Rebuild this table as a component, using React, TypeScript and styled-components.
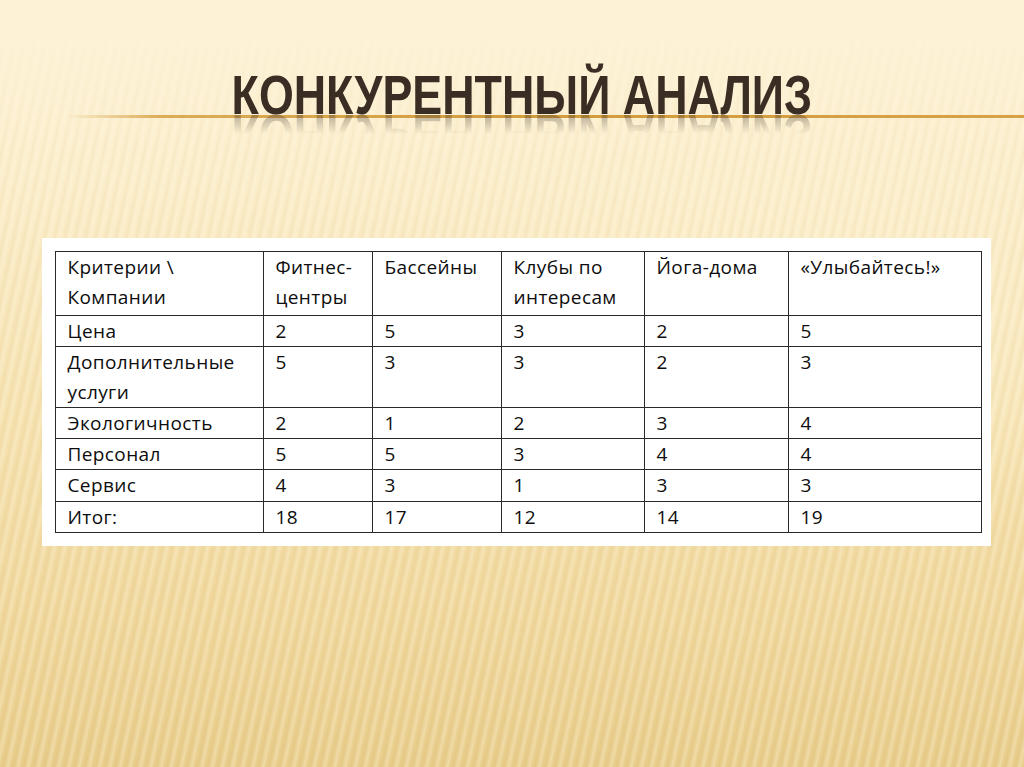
import React from "react";
import styled, { createGlobalStyle } from "styled-components";

const Global = createGlobalStyle`
  html, body { margin: 0; padding: 0; }
  body { width: 1024px; height: 767px; overflow: hidden; }
`;

const Slide = styled.div`
  position: relative;
  width: 1024px;
  height: 767px;
  overflow: hidden;
  background:
    repeating-linear-gradient(102deg, rgba(190,150,70,0) 0px, rgba(190,150,70,0.08) 3px, rgba(255,248,225,0.32) 7px, rgba(190,150,70,0) 10px),
    radial-gradient(ellipse 420px 200px at 820px 330px, rgba(255,244,215,0.55), rgba(255,244,215,0) 100%),
    linear-gradient(180deg, #fdf2d6 0%, #fbedc9 25%, #f6e2b0 55%, #f0d79c 80%, #e8cc8a 100%);
  display: flex;
  flex-direction: column;
  align-items: center;
`;

const Fade = styled.div`
  position: absolute;
  inset: 0;
  background: linear-gradient(180deg, rgba(253,242,214,1) 0%, rgba(253,242,214,0.9) 5%, rgba(253,242,214,0.2) 20%, rgba(253,242,214,0) 35%);
  pointer-events: none;
`;

const Header = styled.div`
  position: relative;
  width: 100%;
  height: 238px;
`;

const Rule = styled.div`
  position: absolute;
  left: 65px;
  right: 0;
  top: 115px;
  height: 3px;
  background: linear-gradient(90deg, rgba(214,160,64,0) 0%, rgba(214,160,64,0.85) 10%, #d39c3c 50%, #d7a247 100%);
`;

const TitleWrap = styled.div`
  position: absolute;
  left: 0;
  right: 0;
  top: 67px;
  display: flex;
  flex-direction: column;
  align-items: center;
  padding-left: 20px;
`;

const Title = styled.h1`
  margin: 0;
  font-family: "Liberation Sans", Arial, sans-serif;
  font-weight: bold;
  font-size: 56px;
  line-height: 56px;
  color: #3a2d23;
  transform: scaleX(0.8);
  white-space: nowrap;
  position: relative;
  z-index: 1;
`;

const Reflection = styled(Title)`
  transform: scaleX(0.8) scaleY(-1);
  margin-top: -17px;
  opacity: 0.55;
  -webkit-mask-image: linear-gradient(0deg, rgba(0,0,0,0.9) 0%, rgba(0,0,0,0) 50%);
  mask-image: linear-gradient(0deg, rgba(0,0,0,0.9) 0%, rgba(0,0,0,0) 50%);
  z-index: 0;
`;

const Panel = styled.div`
  position: relative;
  background: #ffffff;
  padding: 13px 9px 13px 13px;
  margin-left: 8px;
`;

const Table = styled.table`
  border-collapse: collapse;
  font-family: "Open Sans", "Noto Sans", sans-serif;
  font-size: 19px;
  letter-spacing: 0.4px;
  color: #0d0d0d;
`;

const Cell = styled.td<{ $w: number; $h: number }>`
  width: ${(p) => p.$w}px;
  height: ${(p) => p.$h}px;
  box-sizing: border-box;
  border: 1px solid #2a2a2a;
  padding: 0 6px 0 12px;
  vertical-align: top;
  line-height: 30px;
  text-align: left;
  white-space: nowrap;
`;

const widths = [208, 109, 129, 143, 144, 193];

const rows: { h: number; cells: React.ReactNode[] }[] = [
  { h: 64, cells: [<>Критерии \<br />Компании</>, <>Фитнес-<br />центры</>, "Бассейны", <>Клубы по<br />интересам</>, "Йога-дома", "«Улыбайтесь!»"] },
  { h: 30, cells: ["Цена", "2", "5", "3", "2", "5"] },
  { h: 60, cells: [<>Дополнительные<br />услуги</>, "5", "3", "3", "2", "3"] },
  { h: 31, cells: ["Экологичность", "2", "1", "2", "3", "4"] },
  { h: 31, cells: ["Персонал", "5", "5", "3", "4", "4"] },
  { h: 32, cells: ["Сервис", "4", "3", "1", "3", "3"] },
  { h: 30, cells: ["Итог:", "18", "17", "12", "14", "19"] },
];

export default function App() {
  return (
    <>
      <Global />
      <Slide>
        <Fade />
        <Header>
          <Rule />
          <TitleWrap>
            <Title>КОНКУРЕНТНЫЙ АНАЛИЗ</Title>
            <Reflection aria-hidden>КОНКУРЕНТНЫЙ АНАЛИЗ</Reflection>
          </TitleWrap>
        </Header>
        <Panel>
          <Table>
            <tbody>
              {rows.map((r, i) => (
                <tr key={i}>
                  {r.cells.map((c, j) => (
                    <Cell key={j} $w={widths[j]} $h={r.h}>
                      {c}
                    </Cell>
                  ))}
                </tr>
              ))}
            </tbody>
          </Table>
        </Panel>
      </Slide>
    </>
  );
}
